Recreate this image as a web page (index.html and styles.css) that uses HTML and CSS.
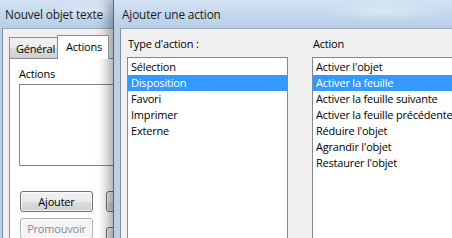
FILE: index.html
```html
<!DOCTYPE html>
<html lang="fr">
<head>
<meta charset="utf-8">
<title>Ajouter une action</title>
<link rel="stylesheet" href="styles.css">
</head>
<body>
<div class="desktop">
  <div class="win win-main">
    <div class="titlebar"><span class="title">Nouvel objet texte</span></div>
    <div class="frame">
      <div class="client client-main">
        <div class="tabs">
          <div class="tab">Général</div>
          <div class="tab tab-active">Actions</div>
        </div>
        <div class="tabpanel">
          <div class="label">Actions</div>
          <div class="listbox listbox-actions"></div>
          <div class="btnrow btnrow-first">
            <button class="btn">Ajouter</button>
            <button class="btn btn-hidden" aria-label="Supprimer"></button>
          </div>
          <div class="btnrow">
            <button class="btn btn-disabled">Promouvoir</button>
            <button class="btn btn-hidden btn-lower" aria-label="Rétrograder"></button>
          </div>
        </div>
      </div>
    </div>
  </div>

  <div class="win win-dialog">
    <div class="titlebar"><span class="title">Ajouter une action</span></div>
    <div class="frame">
      <div class="client client-dialog">
        <div class="column column-type">
          <div class="label">Type d'action :</div>
          <div class="listbox">
            <div class="item">Sélection</div>
            <div class="item selected">Disposition</div>
            <div class="item">Favori</div>
            <div class="item">Imprimer</div>
            <div class="item">Externe</div>
          </div>
        </div>
        <div class="column column-action">
          <div class="label">Action</div>
          <div class="listbox">
            <div class="item">Activer l'objet</div>
            <div class="item selected">Activer la feuille</div>
            <div class="item">Activer la feuille suivante</div>
            <div class="item">Activer la feuille précédente</div>
            <div class="item">Réduire l'objet</div>
            <div class="item">Agrandir l'objet</div>
            <div class="item">Restaurer l'objet</div>
          </div>
        </div>
      </div>
    </div>
  </div>
</div>
</body>
</html>
```

FILE: styles.css
```css
* { box-sizing: border-box; }

html, body {
  margin: 0;
  padding: 0;
}

body {
  width: 452px;
  height: 238px;
  overflow: hidden;
  font-family: "Open Sans", "Noto Sans", "DejaVu Sans", sans-serif;
  font-size: 11px;
  letter-spacing: -0.2px;
  color: #000;
  background: #6f8fb5;
}

.desktop {
  position: relative;
  width: 452px;
  height: 238px;
  overflow: hidden;
}

.win {
  position: absolute;
  top: 0;
  display: flex;
  flex-direction: column;
  background: linear-gradient(180deg, #cfe0f2 0%, #bcd3ea 40%, #b4cde7 100%);
}

.win-main {
  left: -5px;
  width: 140px;
  height: 260px;
  border-left: 1px solid #8096b0;
}

.win-dialog {
  left: 113px;
  width: 360px;
  height: 260px;
  border-left: 1px solid #55667c;
  box-shadow: -5px 0 12px rgba(0, 0, 0, 0.35);
}

.titlebar {
  height: 28px;
  display: flex;
  align-items: center;
  background:
    radial-gradient(ellipse 60px 10px at 75% 40%, rgba(255,255,255,0.35), rgba(255,255,255,0) 100%),
    linear-gradient(180deg, #d3e3f4 0%, #c2d7ed 55%, #b8cfe8 100%);
  flex: none;
}

.win-main .titlebar { padding-left: 9px; }
.win-dialog .titlebar { padding-left: 8px; }

.title {
  font-size: 11.8px;
  letter-spacing: -0.15px;
  color: #1b1b1b;
  white-space: nowrap;
}

.frame {
  flex: 1;
  display: flex;
  padding-left: 6px;
  background: linear-gradient(90deg, #b9d0e9 0%, #cde0f3 60%, #bcd3ea 100%);
}

.client {
  flex: 1;
  background: #f0f0f0;
  border-left: 1px solid #7d8ea3;
  border-top: 1px solid #9aabbf;
}

/* ---------- listbox (shared) ---------- */

.listbox {
  background: #fff;
  border: 1px solid #828790;
  padding: 1px 0 0;
}

/* ---------- main window ---------- */

.client-main {
  padding: 6px 0 0 6px;
  display: flex;
  flex-direction: column;
}

.tabs {
  display: flex;
  align-items: flex-end;
  height: 23px;
  position: relative;
  z-index: 1;
}

.tab {
  height: 21px;
  padding: 1px 0 0 6px;
  display: flex;
  align-items: center;
  border: 1px solid #898c95;
  border-bottom: none;
  background: linear-gradient(180deg, #f2f2f2 0%, #ebebeb 50%, #dcdcdc 51%, #cfcfcf 100%);
  margin-right: -1px;
  white-space: nowrap;
  flex: none;
  width: 49px;
}

.tab-active {
  height: 24px;
  margin-bottom: -1px;
  background: #fff;
  padding: 0 0 3px 8px;
  width: 52px;
}

.tabpanel {
  flex: 1;
  background: #fff;
  border: 1px solid #898c95;
  padding: 7px 0 0 9px;
  display: flex;
  flex-direction: column;
}

.tabpanel .label {
  line-height: 15px;
}

.tabpanel .listbox-actions {
  flex: none;
  margin-top: 3px;
  height: 82px;
  width: 120px;
}

.btnrow {
  display: flex;
  gap: 13px;
  margin-top: 6px;
  padding-left: 1px;
}

.btnrow-first { margin-top: 25px; }

.btn {
  width: 73px;
  height: 21px;
  padding: 0;
  font-family: inherit;
  font-size: 11px;
  letter-spacing: -0.2px;
  color: #000;
  border: 1px solid #707070;
  border-radius: 3px;
  background: linear-gradient(180deg, #f2f2f2 0%, #ebebeb 50%, #dddddd 51%, #cfcfcf 100%);
  box-shadow: inset 0 0 0 1px rgba(255,255,255,0.7);
  flex: none;
}

.btn-disabled {
  color: #8a8a8a;
  border-color: #adb2b5;
  background: #f4f4f4;
}

.btn-lower { margin-top: 9px; }

/* ---------- dialog ---------- */

.client-dialog {
  display: flex;
  gap: 24px;
  padding: 8px 0 0 6px;
}

.column {
  display: flex;
  flex-direction: column;
}

.column-type { width: 161px; }
.column-action { width: 200px; }

.client-dialog .label {
  line-height: 14px;
  height: 14px;
  margin-bottom: 6px;
  padding-left: 1px;
}

.client-dialog .listbox {
  flex: 1;
}

.item {
  height: 16px;
  line-height: 16px;
  padding-left: 3px;
  white-space: nowrap;
}

.item.selected {
  background: #3399ff;
  color: #fff;
}
```
